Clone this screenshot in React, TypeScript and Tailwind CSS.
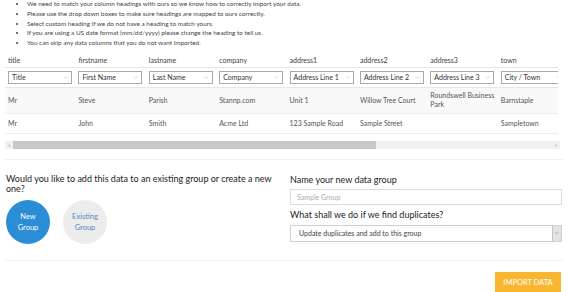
import { ChevronDown } from 'lucide-react';

const notes = [
  'We need to match your column headings with ours so we know how to correctly import your data.',
  'Please use the drop down boxes to make sure headings are mapped to ours correctly.',
  'Select custom heading if we do not have a heading to match yours.',
  'If you are using a US date format (mm/dd/yyyy) please change the heading to tell us.',
  'You can skip any data columns that you do not want imported.',
];

const columns = [
  { key: 'title', mapped: 'Title' },
  { key: 'firstname', mapped: 'First Name' },
  { key: 'lastname', mapped: 'Last Name' },
  { key: 'company', mapped: 'Company' },
  { key: 'address1', mapped: 'Address Line 1' },
  { key: 'address2', mapped: 'Address Line 2' },
  { key: 'address3', mapped: 'Address Line 3' },
  { key: 'town', mapped: 'City / Town' },
];

const rows = [
  ['Mr', 'Steve', 'Parish', 'Stannp.com', 'Unit 1', 'Willow Tree Court', 'Roundswell Business Park', 'Barnstaple'],
  ['Mr', 'John', 'Smith', 'Acme Ltd', '123 Sample Road', 'Sample Street', '', 'Sampletown'],
];

const MapSelect = ({ label }: { label: string }) => (
  <div className="w-[64px] h-[13px] border border-[#a9a9a9] bg-white flex items-center justify-between pl-[3px] pr-[2px]">
    <span className="text-[7px] text-[#333] whitespace-nowrap leading-none">{label}</span>
    <ChevronDown size={7} strokeWidth={1.5} className="text-[#aaa]" />
  </div>
);

export default function App() {
  return (
    <div className="w-[568px] h-[292px] overflow-hidden bg-white font-['Lato','Open_Sans',sans-serif] text-[#333]">
      {/* Instructions */}
      <ul className="list-disc pl-[27px] -mt-[1px] text-[6.4px] leading-[9.75px] text-[#444]">
        {notes.map((n) => (
          <li key={n}>{n}</li>
        ))}
      </ul>

      {/* Column mapping table */}
      <div className="ml-[5px] mt-[5px] w-[553px] overflow-hidden">
        <div className="w-[700px]">
          <div className="flex h-[15px] items-center border-b border-[#e6e6e6]">
            {columns.map((c) => (
              <div key={c.key} className="w-[70.4px] shrink-0 pl-[3px] text-[7px] text-[#444]">
                {c.key}
              </div>
            ))}
          </div>
          <div className="flex h-[20px] items-center border-b border-[#e6e6e6]">
            {columns.map((c) => (
              <div key={c.key} className="w-[70.4px] shrink-0 pl-[3px]">
                <MapSelect label={c.mapped} />
              </div>
            ))}
          </div>
          {rows.map((r, i) => (
            <div
              key={i}
              className={`flex items-center border-b border-[#eeeeee] ${i === 0 ? 'h-[26px] bg-[#f9f9f9]' : 'h-[20px]'}`}
            >
              {r.map((v, j) => (
                <div key={j} className="w-[70.4px] shrink-0 pl-[3px] text-[7px] leading-[9px] text-[#555]">
                  {v}
                </div>
              ))}
            </div>
          ))}
        </div>
      </div>

      {/* Horizontal scrollbar */}
      <div className="ml-[5px] mt-[7px] w-[555px] h-[8px] flex items-center bg-[#f1f1f1]">
        <span className="w-[8px] text-center text-[6px] leading-none text-[#666]">‹</span>
        <div className="flex-1 h-full">
          <div className="w-[363px] h-full bg-[#c8c8c8]" />
        </div>
        <span className="w-[8px] text-center text-[6px] leading-none text-[#666]">›</span>
      </div>

      <div className="mx-[5px] mt-[10px] border-t border-[#efefef]" />

      {/* Group options */}
      <div className="flex mt-[14px] h-[84px]">
        <div className="w-[279px] ml-[6px]">
          <p className="text-[9px] leading-[10.5px] text-[#222]">
            Would you like to add this data to an existing group or create a new one?
          </p>
          <div className="flex gap-[13px] mt-[5px]">
            <button className="w-[44px] h-[44px] rounded-full bg-[#2a8dd6] text-white text-[7.5px] leading-[11px]">
              New
              <br />
              Group
            </button>
            <button className="w-[44px] h-[44px] rounded-full bg-[#ececec] text-[#5a86bd] text-[7.5px] leading-[11px]">
              Existing
              <br />
              Group
            </button>
          </div>
        </div>
        <div className="ml-[5px] w-[272px]">
          <p className="text-[9px] leading-[11px] text-[#222]">Name your new data group</p>
          <div className="mt-[4px] h-[16px] border border-[#dcdcdc] flex items-center pl-[6px] text-[7px] text-[#aaa]">
            Sample Group
          </div>
          <p className="mt-[4px] text-[9px] leading-[11px] text-[#222]">
            What shall we do if we find duplicates?
          </p>
          <div className="mt-[5px] h-[17px] border border-[#cfcfcf] flex items-center justify-between pl-[8px]">
            <span className="text-[7px] text-[#444]">Update duplicates and add to this group</span>
            <span className="w-[9px] h-full bg-[#e3e3e3] border-l border-[#c4c4c4] flex items-center justify-center">
              <ChevronDown size={6} strokeWidth={2} className="text-[#777]" />
            </span>
          </div>
        </div>
      </div>

      <div className="mx-[5px] mt-[2px] border-t border-[#f0f0f0]" />

      <div className="flex justify-end mt-[11px] mr-[7px]">
        <button className="w-[66px] h-[21px] bg-[#f9b630] text-white text-[7.5px] uppercase">Import data</button>
      </div>
    </div>
  );
}
